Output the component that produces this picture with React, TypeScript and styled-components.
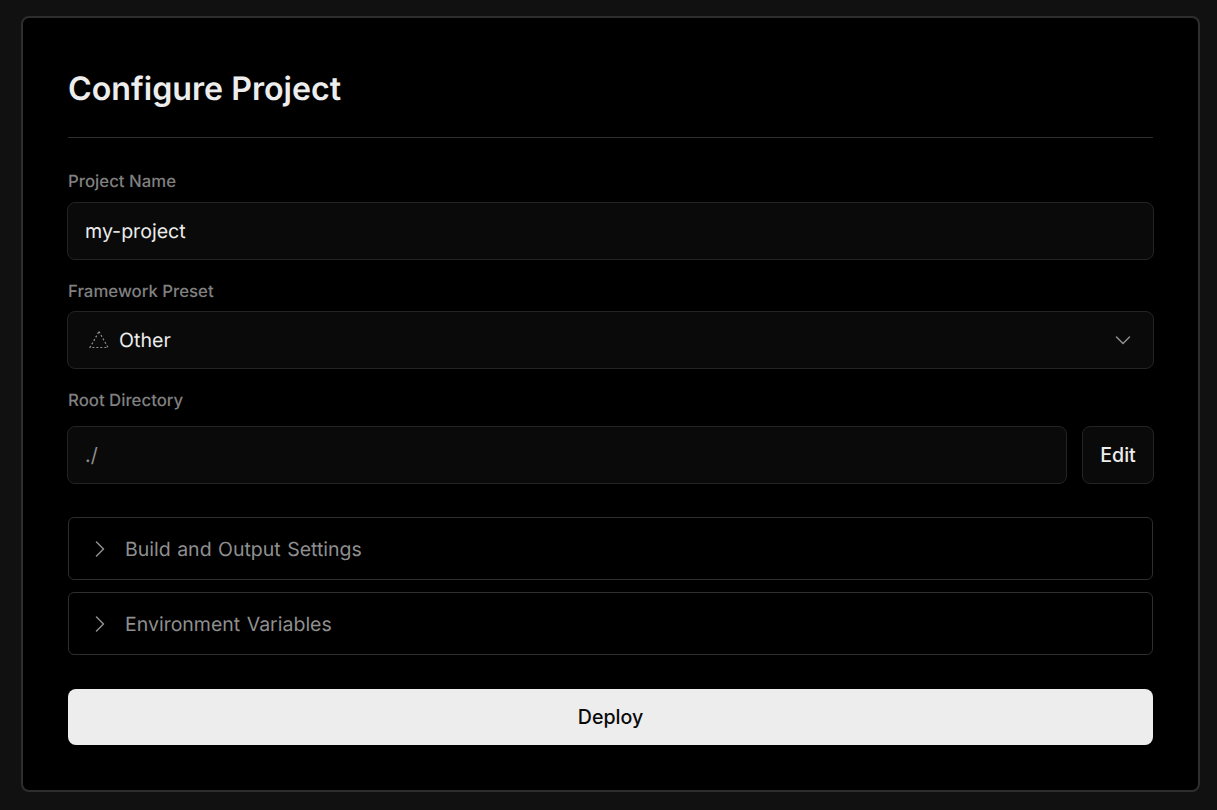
import React from "react";
import styled, { createGlobalStyle } from "styled-components";

const Global = createGlobalStyle`
  html, body { margin: 0; padding: 0; background: #111111; }
  body { font-family: Inter, "Liberation Sans", sans-serif; text-rendering: geometricPrecision; -webkit-font-smoothing: antialiased; }
  * { box-sizing: border-box; }
`;

const Page = styled.div`
  width: 1217px;
  height: 810px;
  padding: 16px 17px 18px 21px;
  overflow: hidden;
`;

const Card = styled.main`
  height: 776px;
  background: #000;
  border: 2px solid #2e2e2e;
  border-radius: 8px;
  padding: 51px 45px 0 45px;
  display: flex;
  flex-direction: column;
`;

const Title = styled.h1`
  margin: 0;
  font-size: 32.2px;
  line-height: 40px;
  font-weight: 600;
  color: #ededed;
`;

const Divider = styled.hr`
  margin: 28px 0 0;
  border: 0;
  height: 1px;
  background: #2e2e2e;
`;

const Label = styled.label<{ $top: number; $bottom: number }>`
  display: block;
  margin: ${(p) => p.$top}px 0 ${(p) => p.$bottom}px;
  font-size: 16.8px;
  line-height: 20px;
  font-weight: 500;
  color: #808080;
`;

const Field = styled.div<{ $muted?: boolean }>`
  height: 58px;
  margin: 0 -1px;
  padding: 0 17px;
  display: flex;
  align-items: center;
  background: #0a0a0a;
  border: 1px solid #242424;
  border-radius: 8px;
  font-size: 19.6px;
  color: ${(p) => (p.$muted ? "#8f8f8f" : "#ededed")};
`;

const SelectField = styled(Field)`
  padding: 0 20px 0 21px;
  justify-content: space-between;
`;

const SelectValue = styled.span`
  display: flex;
  align-items: center;
  gap: 10px;
`;

const Row = styled.div`
  display: flex;
  gap: 15px;
`;

const RowField = styled(Field)`
  flex: 1;
  margin-right: 0;
`;

const EditButton = styled.button`
  width: 72px;
  height: 58px;
  margin-right: -1px;
  padding: 0;
  background: #0a0a0a;
  border: 1px solid #242424;
  border-radius: 8px;
  font: 500 19.6px Inter, sans-serif;
  color: #ededed;
`;

const Accordion = styled.div`
  height: 63px;
  padding-left: 21px;
  display: flex;
  align-items: center;
  gap: 15px;
  border: 1px solid #2e2e2e;
  border-radius: 6px;
  font-size: 19.5px;
  word-spacing: 1px;
  color: #8f8f8f;
`;

const AccordionList = styled.div`
  margin-top: 33px;
  display: flex;
  flex-direction: column;
  gap: 12px;
`;

const Deploy = styled.button`
  margin-top: 34px;
  height: 56px;
  padding: 0;
  background: #ededed;
  border: 0;
  border-radius: 8px;
  font: 500 19.6px Inter, sans-serif;
  color: #0a0a0a;
`;

const Chevron = ({ d }: { d: string }) => (
  <svg width="20" height="20" viewBox="0 0 20 20" fill="none" stroke="#8f8f8f" strokeWidth="1.5" strokeLinecap="round" strokeLinejoin="round">
    <path d={d} />
  </svg>
);

const FrameworkIcon = () => (
  <svg width="20" height="18" viewBox="0 0 20 18" fill="none" stroke="#8f8f8f" strokeWidth="1.2" strokeDasharray="2 2">
    <path d="M10 0.5 L19 16.5 L1 16.5 Z" />
  </svg>
);

export default function App() {
  return (
    <Page>
      <Global />
      <Card>
        <Title>Configure Project</Title>
        <Divider />
        <Label $top={34} $bottom={10}>Project Name</Label>
        <Field>my-project</Field>
        <Label $top={22} $bottom={9}>Framework Preset</Label>
        <SelectField>
          <SelectValue>
            <FrameworkIcon />
            Other
          </SelectValue>
          <Chevron d="M3.5 7 L10 13.5 L16.5 7" />
        </SelectField>
        <Label $top={22} $bottom={15}>Root Directory</Label>
        <Row>
          <RowField $muted>./</RowField>
          <EditButton>Edit</EditButton>
        </Row>
        <AccordionList>
          <Accordion>
            <Chevron d="M6.5 3 L13.5 10 L6.5 17" />
            Build and Output Settings
          </Accordion>
          <Accordion>
            <Chevron d="M6.5 3 L13.5 10 L6.5 17" />
            Environment Variables
          </Accordion>
        </AccordionList>
        <Deploy>Deploy</Deploy>
      </Card>
    </Page>
  );
}
